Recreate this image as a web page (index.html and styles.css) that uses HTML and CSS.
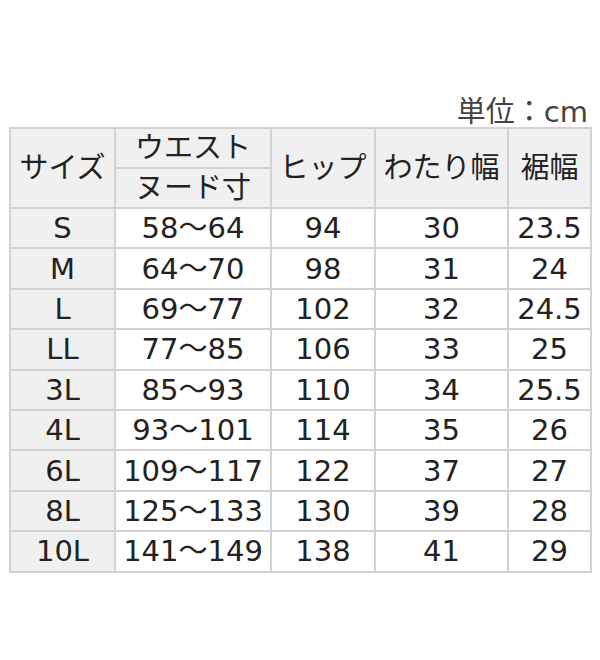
FILE: index.html
```html
<!DOCTYPE html>
<html lang="ja">
<head>
<meta charset="utf-8">
<link rel="stylesheet" href="styles.css">
</head>
<body>
<div class="wrap">
  <div class="unit">単位：cm</div>
  <table class="size">
    <colgroup>
      <col class="c1"><col class="c2"><col class="c3"><col class="c4"><col class="c5">
    </colgroup>
    <thead>
      <tr><th rowspan="2">サイズ</th><th class="half">ウエスト</th><th rowspan="2">ヒップ</th><th rowspan="2">わたり幅</th><th rowspan="2">裾幅</th></tr>
      <tr><th class="half">ヌード寸</th></tr>
    </thead>
    <tbody>
      <tr><th>S</th><td>58～64</td><td>94</td><td>30</td><td>23.5</td></tr>
      <tr><th>M</th><td>64～70</td><td>98</td><td>31</td><td>24</td></tr>
      <tr><th>L</th><td>69～77</td><td>102</td><td>32</td><td>24.5</td></tr>
      <tr><th>LL</th><td>77～85</td><td>106</td><td>33</td><td>25</td></tr>
      <tr><th>3L</th><td>85～93</td><td>110</td><td>34</td><td>25.5</td></tr>
      <tr><th>4L</th><td>93～101</td><td>114</td><td>35</td><td>26</td></tr>
      <tr><th>6L</th><td>109～117</td><td>122</td><td>37</td><td>27</td></tr>
      <tr><th>8L</th><td>125～133</td><td>130</td><td>39</td><td>28</td></tr>
      <tr><th>10L</th><td>141～149</td><td>138</td><td>41</td><td>29</td></tr>
    </tbody>
  </table>
</div>
</body>
</html>
```

FILE: styles.css
```css
html, body {
  margin: 0;
  padding: 0;
  background: #ffffff;
}
.wrap {
  padding: 97px 10px 0 9px;
  font-family: "DejaVu Sans", "Noto Sans CJK JP", sans-serif;
  color: #222;
}
.unit {
  text-align: right;
  font-size: 29px;
  line-height: 30px;
  color: #444;
  height: 30px;
  margin-right: 2px;
}
.size {
  border-collapse: collapse;
  table-layout: fixed;
  width: 581px;
  border: 2px solid #cfcfcf;
}
.c1 { width: 105px; }
.c2 { width: 156px; }
.c3 { width: 104px; }
.c4 { width: 133px; }
.c5 { width: 83px; }
.size th, .size td {
  border: 2px solid #d2d2d2;
  text-align: center;
  font-weight: normal;
  font-size: 29px;
  height: 38.4px;
  padding: 0;
  line-height: 34px;
  white-space: nowrap;
}
.size thead th {
  background: #f0f0f0;
  height: 38px;
}
.size tbody th {
  background: #f0f0f0;
}
.size td {
  background: #ffffff;
}
```
